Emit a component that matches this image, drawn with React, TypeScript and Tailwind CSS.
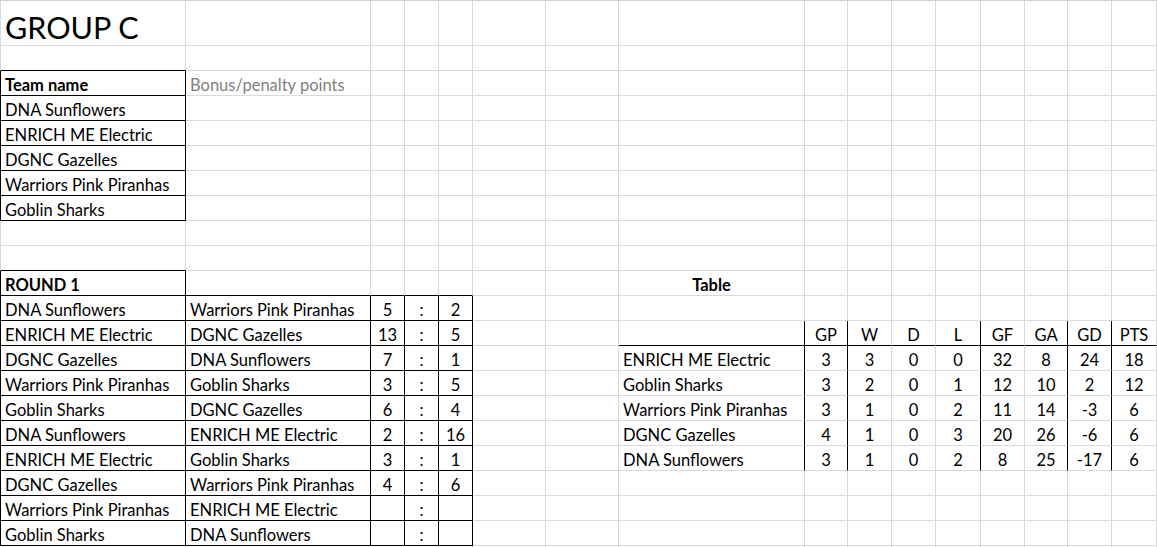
import React from "react";
import clsx from "clsx";

const teams = ["DNA Sunflowers", "ENRICH ME Electric", "DGNC Gazelles", "Warriors Pink Piranhas", "Goblin Sharks"];

const matches: [string, string, string, string][] = [
  ["DNA Sunflowers", "Warriors Pink Piranhas", "5", "2"],
  ["ENRICH ME Electric", "DGNC Gazelles", "13", "5"],
  ["DGNC Gazelles", "DNA Sunflowers", "7", "1"],
  ["Warriors Pink Piranhas", "Goblin Sharks", "3", "5"],
  ["Goblin Sharks", "DGNC Gazelles", "6", "4"],
  ["DNA Sunflowers", "ENRICH ME Electric", "2", "16"],
  ["ENRICH ME Electric", "Goblin Sharks", "3", "1"],
  ["DGNC Gazelles", "Warriors Pink Piranhas", "4", "6"],
  ["Warriors Pink Piranhas", "ENRICH ME Electric", "", ""],
  ["Goblin Sharks", "DNA Sunflowers", "", ""],
];

const headers = ["GP", "W", "D", "L", "GF", "GA", "GD", "PTS"];

const standings: [string, ...string[]][] = [
  ["ENRICH ME Electric", "3", "3", "0", "0", "32", "8", "24", "18"],
  ["Goblin Sharks", "3", "2", "0", "1", "12", "10", "2", "12"],
  ["Warriors Pink Piranhas", "3", "1", "0", "2", "11", "14", "-3", "6"],
  ["DGNC Gazelles", "4", "1", "0", "3", "20", "26", "-6", "6"],
  ["DNA Sunflowers", "3", "1", "0", "2", "8", "25", "-17", "6"],
];

type Cell = { text: string; kind?: "bold" | "muted" | "title" | "center" | "boldCenter" };

const ROWS = 22;
const COLS = 16;

const inRange = (v: number, a: number, b: number) => v >= a && v <= b;

// which cell edges carry the thick black border
const blackLeft = (r: number) => inRange(r, 3, 8) || inRange(r, 11, 21);

const blackRight = (r: number, c: number) => {
  if (c === 0) return inRange(r, 3, 8) || inRange(r, 11, 21);
  if (c >= 1 && c <= 4) return inRange(r, 12, 21);
  if ([7, 8, 11, 13, 14].includes(c)) return inRange(r, 13, 18);
  return false;
};

const blackBottom = (r: number, c: number) => {
  if (c === 0) return inRange(r, 2, 8) || inRange(r, 10, 21);
  if (c >= 1 && c <= 4) return inRange(r, 11, 21);
  if (c >= 7 && c <= 15) return r === 13;
  return false;
};

const buildCells = () => {
  const cells: Record<string, Cell> = {};
  const put = (r: number, c: number, cell: Cell) => (cells[`${r},${c}`] = cell);

  put(1, 0, { text: "GROUP C", kind: "title" });
  put(3, 0, { text: "Team name", kind: "bold" });
  put(3, 1, { text: "Bonus/penalty points", kind: "muted" });
  teams.forEach((t, i) => put(4 + i, 0, { text: t }));

  put(11, 0, { text: "ROUND 1", kind: "bold" });
  matches.forEach(([home, away, a, b], i) => {
    put(12 + i, 0, { text: home });
    put(12 + i, 1, { text: away });
    put(12 + i, 2, { text: a, kind: "center" });
    put(12 + i, 3, { text: ":", kind: "center" });
    put(12 + i, 4, { text: b, kind: "center" });
  });

  put(11, 7, { text: "Table", kind: "boldCenter" });
  headers.forEach((h, i) => put(13, 8 + i, { text: h, kind: "center" }));
  standings.forEach(([name, ...nums], i) => {
    put(14 + i, 7, { text: name });
    nums.forEach((n, j) => put(14 + i, 8 + j, { text: n, kind: "center" }));
  });
  return cells;
};

export default function App() {
  const cells = buildCells();

  return (
    <div className="w-[1157px] h-[547px] overflow-hidden bg-white font-['Lato',sans-serif] text-[16.5px] text-black">
      <div className="grid grid-cols-[186px_185px_34px_34px_34px_73px_73px_186px_43px_44px_44px_45px_44px_43px_44px_45px] grid-rows-[45px_repeat(21,25px)] border-t border-t-[#d4d4d4]">
        {Array.from({ length: ROWS }, (_, i) => i + 1).map((r) =>
          Array.from({ length: COLS }, (_, c) => {
            const cell = cells[`${r},${c}`];
            return (
              <div
                key={`${r}-${c}`}
                className={clsx(
                  "flex items-end whitespace-nowrap overflow-visible border-r border-b",
                  blackRight(r, c) ? "border-r-black" : "border-r-[#dadada]",
                  blackBottom(r, c) ? "border-b-black" : "border-b-[#dadada]",
                  c === 0 && "border-l",
                  c === 0 && (blackLeft(r) ? "border-l-black" : "border-l-[#dadada]"),
                  cell?.kind === "center" || cell?.kind === "boldCenter" ? "justify-center" : "pl-[4px]"
                )}
              >
                {cell && (
                  <span
                    className={clsx(
                      cell.kind === "title" ? "text-[30.5px] leading-[36px]" : "leading-[20px]",
                      (cell.kind === "bold" || cell.kind === "boldCenter") && "font-bold",
                      cell.kind === "muted" && "text-[#7f7f7f]"
                    )}
                  >
                    {cell.text}
                  </span>
                )}
              </div>
            );
          })
        )}
      </div>
    </div>
  );
}
